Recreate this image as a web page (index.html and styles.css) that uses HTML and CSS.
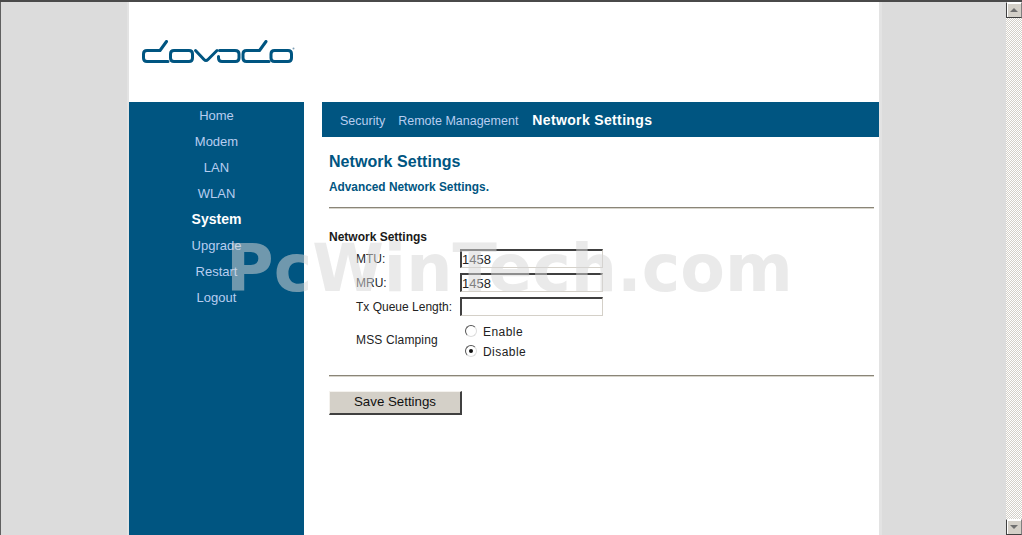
FILE: index.html
```html
<!DOCTYPE html>
<html lang="en">
<head>
<meta charset="utf-8">
<title>Network Settings</title>
<link rel="stylesheet" href="styles.css">
</head>
<body>
<div class="viewport">
  <div class="stage">
    <div class="page">
      <header class="brand">
        <svg class="logo" width="153" height="25" viewBox="0 0 153 25" aria-label="dovado">
          <g fill="none" stroke="#005581" stroke-width="3" stroke-linecap="round" stroke-linejoin="round">
            <path d="M24.5 1.5 L18 10.5 H5 Q1.5 10.5 1.5 14 V18 Q1.5 21.5 5 21.5 H26"/>
            <path d="M32 10.5 H47 Q50.5 10.5 50.5 14 V18 Q50.5 21.5 47 21.5 H32 Q28.5 21.5 28.5 18 V14 Q28.5 10.5 32 10.5 Z"/>
            <path d="M53.5 10.5 L62 19.5 Q64 21.5 66 19.5 L75 10.5"/>
            <path d="M77.5 10.5 H93 Q97 10.5 97 14 V18 Q97 21.5 93.5 21.5 H80 Q76.5 21.5 76.5 18 V16.5"/>
            <path d="M124 1.5 L117.5 10.5 H104.5 Q101 10.5 101 14 V18 Q101 21.5 104.5 21.5 H127"/>
            <path d="M132.5 10.5 H146 Q149.5 10.5 149.5 14 V18 Q149.5 21.5 146 21.5 H132.5 Q129 21.5 129 18 V14 Q129 10.5 132.5 10.5 Z"/>
          </g>
          <circle cx="151.5" cy="8.5" r="1" fill="#7f9fb5"/>
        </svg>
      </header>
      <div class="columns">
        <nav class="sidenav">
          <a>Home</a>
          <a>Modem</a>
          <a>LAN</a>
          <a>WLAN</a>
          <a class="active">System</a>
          <a>Upgrade</a>
          <a>Restart</a>
          <a>Logout</a>
        </nav>
        <main class="content">
          <div class="tabs">
            <a>Security</a>
            <a>Remote Management</a>
            <a class="active">Network Settings</a>
          </div>
          <div class="panel">
            <h1>Network Settings</h1>
            <p class="subtitle">Advanced Network Settings.</p>
            <hr class="rule">
            <h2>Network Settings</h2>
            <div class="form-row"><span class="label">MTU:</span><input class="field" type="text" value="1458"></div>
            <div class="form-row"><span class="label">MRU:</span><input class="field" type="text" value="1458"></div>
            <div class="form-row"><span class="label">Tx Queue Length:</span><input class="field" type="text"></div>
            <div class="form-row radios">
              <span class="label">MSS Clamping</span>
              <div class="radio-list">
                <label class="radio"><span class="dot"></span>Enable</label>
                <label class="radio"><span class="dot on"></span>Disable</label>
              </div>
            </div>
            <hr class="rule second">
            <button class="save" type="button">Save Settings</button>
          </div>
        </main>
      </div>
    </div>
    <div class="watermark">PcWinTech.com</div>
  </div>
  <div class="scrollbar">
    <div class="arrow"><span class="tri up"></span></div>
    <div class="track"></div>
    <div class="arrow"><span class="tri down"></span></div>
  </div>
</div>
</body>
</html>
```
FILE: styles.css
```css
* { box-sizing: border-box; }
html, body { margin: 0; height: 100%; overflow: hidden; }
body { font-family: "Liberation Sans", Arial, sans-serif; font-size: 12px; background: #dcdcdc; }
.viewport { display: flex; height: 535px; width: 1022px; border-top: 2px solid #4a4a4a; }
.stage { position: relative; flex: 1; display: flex; padding-left: 128px; border-left: 1px solid #606060; overflow: hidden; }
.page { width: 750px; height: 533px; background: #fff; display: flex; flex-direction: column; box-shadow: 3px 0 0 #e3e3e3, -2px 0 0 #e3e3e3; }
.brand { height: 100px; padding: 38px 0 0 13px; flex: none; }
.logo { display: block; }
.columns { display: flex; flex: 1; min-height: 0; }
.sidenav { width: 175px; flex: none; background: #005581; display: flex; flex-direction: column; }
.sidenav a { height: 26px; line-height: 26px; padding-top: 1px; text-align: center; font-size: 13px; color: #b8cdf0; }
.sidenav a.active { color: #fff; font-weight: bold; font-size: 14px; padding-top: 0; }
.content { margin-left: 18px; flex: 1; min-width: 0; }
.tabs { height: 35px; background: #005581; display: flex; align-items: center; padding-left: 18px; gap: 13px; font-size: 12.5px; color: #b8cdf0; }
.tabs a { padding-top: 2px; }
.tabs a.active { color: #fff; font-weight: bold; font-size: 14px; letter-spacing: .35px; padding-top: 0; margin-left: 1px; }
.panel { padding: 16px 5px 0 7px; }
h1 { margin: 0; font-size: 16px; line-height: 18px; font-weight: bold; color: #005581; letter-spacing: .05px; }
.subtitle { margin: 9px 0 0; font-size: 11.85px; line-height: 14px; font-weight: bold; color: #005581; }
.rule { margin: 13px 0 0; border: 0; height: 2px; background: linear-gradient(#8a8578 50%, #d8d5cc 50%); }
h2 { margin: 21px 0 2px; font-size: 12px; line-height: 14px; font-weight: bold; color: #1a1a1a; }
.form-row { display: flex; align-items: center; height: 24px; padding-left: 27px; color: #222; }
.label { width: 104px; flex: none; padding-top: 1px; }
.field { width: 143px; height: 19px; padding: 1px 0 0 0; margin: 0; font: 13px "Liberation Sans", Arial, sans-serif; color: #222; background: transparent; border-style: solid; border-width: 2px 1px 1px 2px; border-color: #404040 #d4d0c8 #d4d0c8 #404040; }
.radios { height: 40px; margin-top: 4px; }
.radios .label { margin-bottom: 4px; padding-top: 0; letter-spacing: .15px; }
.radio-list { display: flex; flex-direction: column; margin-left: 1px; }
.radio { display: flex; align-items: center; height: 20px; gap: 6px; padding-left: 4px; letter-spacing: .45px; }
.dot { width: 12px; height: 12px; border-radius: 50%; border: 1px solid; border-color: #555 #ddd #ddd #555; background: #fff; display: flex; align-items: center; justify-content: center; margin-top: -3px; }
.dot.on::after { content: ""; width: 4px; height: 4px; border-radius: 50%; background: #111; }
.rule.second { margin-top: 13px; }
.save { display: block; margin-top: 14px; width: 133px; height: 24px; padding: 0 0 2px; font: 13.3px "Liberation Sans", Arial, sans-serif; color: #111; background: #d4d0c8; border-style: solid; border-width: 1px 2px 2px 1px; border-color: #f4f2ee #404040 #404040 #f4f2ee; }
.watermark { position: absolute; left: 225px; top: 232px; font: bold 65px/70px "DejaVu Sans", sans-serif; color: rgba(215,215,215,.52); white-space: nowrap; pointer-events: none; }
.scrollbar { width: 16px; flex: none; display: flex; flex-direction: column; background: repeating-conic-gradient(#d4d0c8 0 25%, #fff 0 50%) 0 0 / 2px 2px; }
.track { flex: 1; }
.arrow { height: 16px; flex: none; background: #d4d0c8; border-style: solid; border-width: 1px; border-color: #fff #808080 #404040 #404040; box-shadow: inset 1px 1px 0 #fff; display: flex; align-items: center; justify-content: center; }
.tri { width: 0; height: 0; border-left: 4px solid transparent; border-right: 4px solid transparent; }
.tri.up { border-bottom: 4px solid #707070; }
.tri.down { border-top: 4px solid #707070; }
```
